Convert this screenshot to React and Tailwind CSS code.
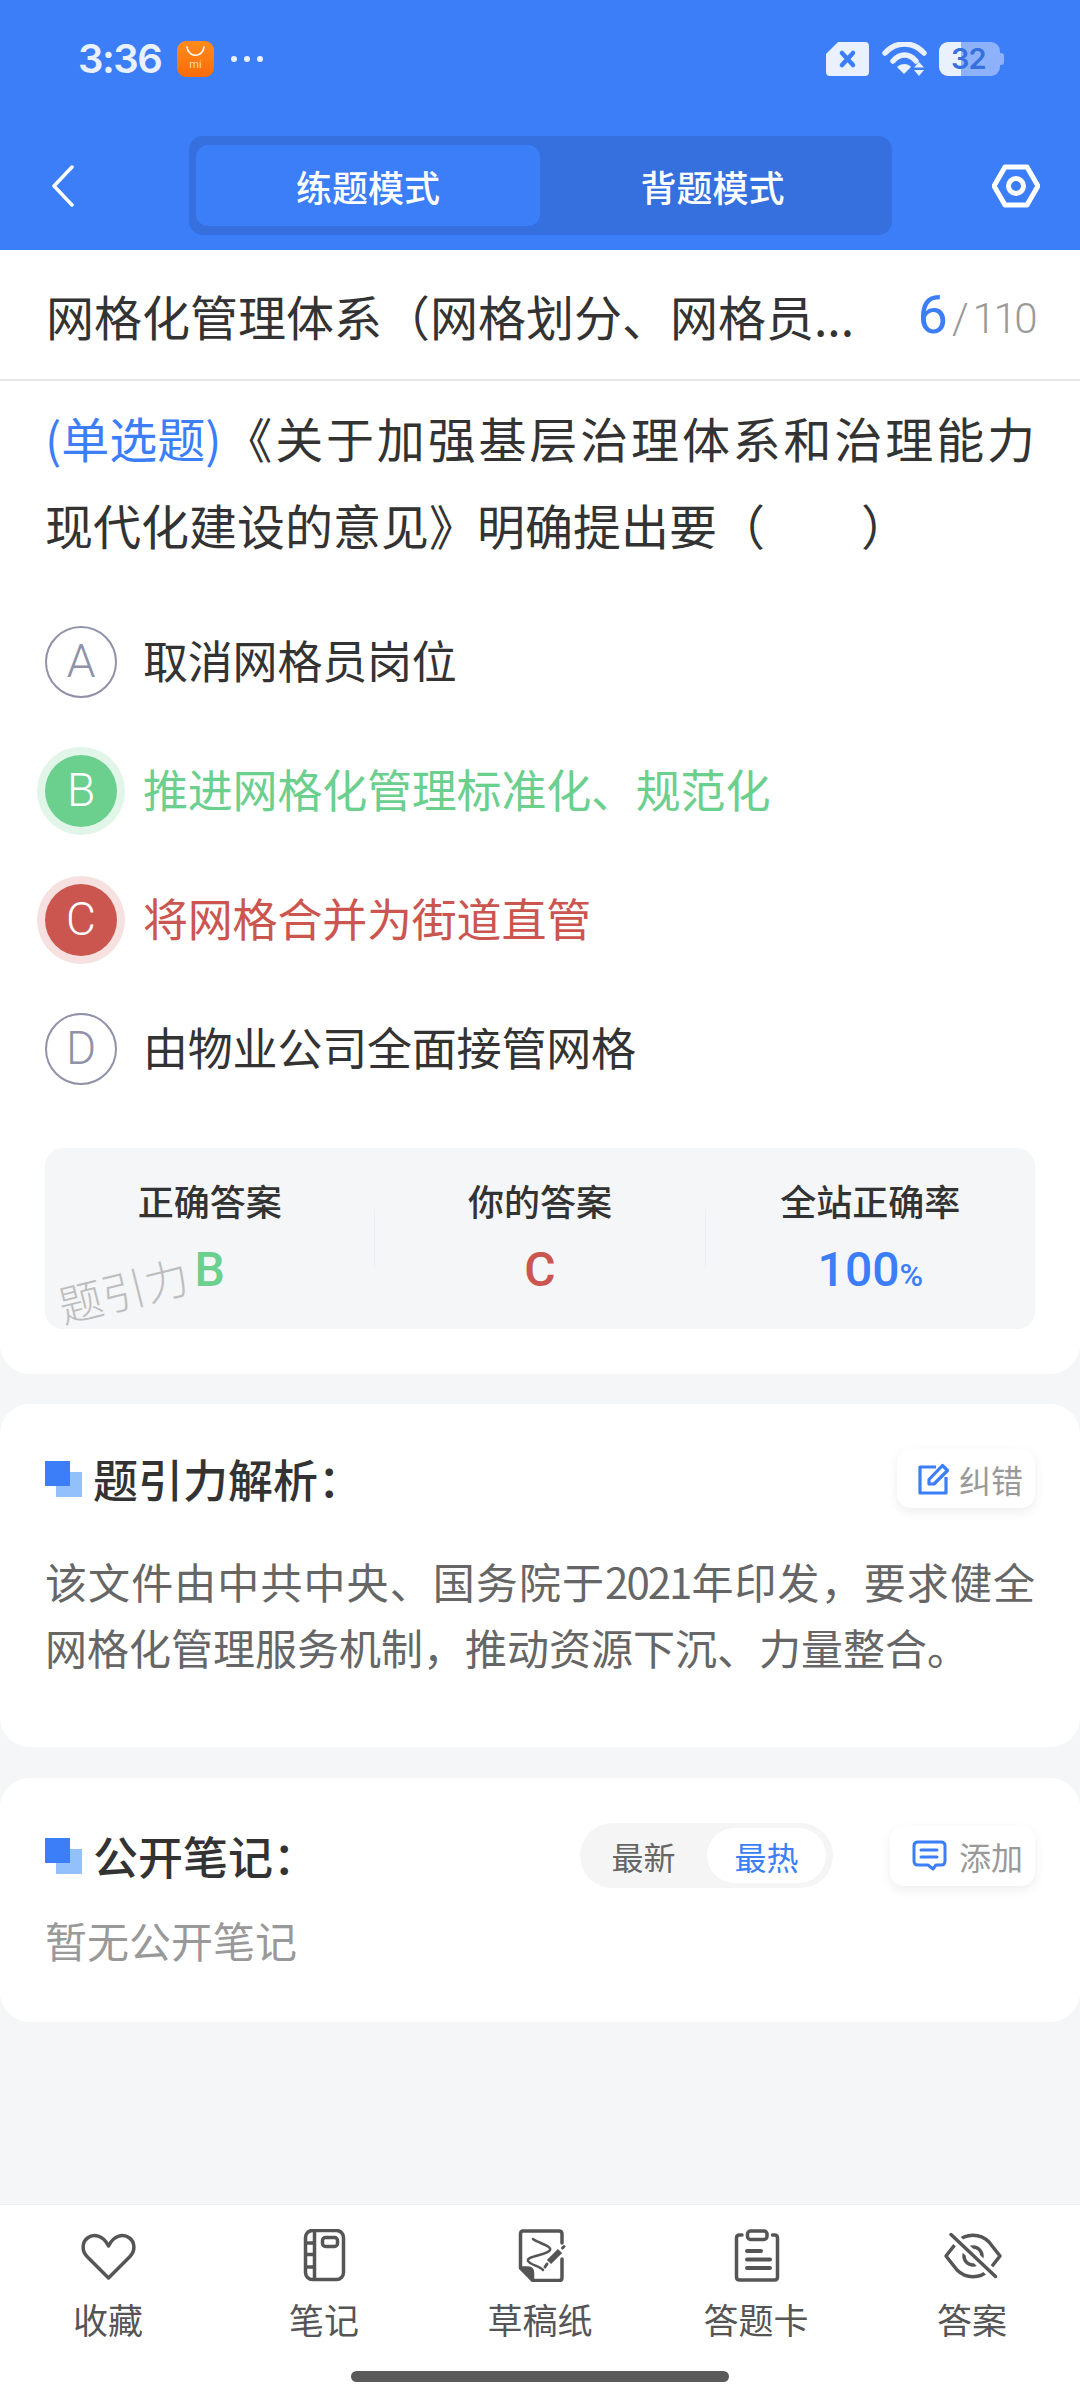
import React from "react";

const options = [
  { key: "A", text: "取消网格员岗位" },
  { key: "B", text: "推进网格化管理标准化、规范化", state: "right" },
  { key: "C", text: "将网格合并为街道直管", state: "wrong" },
  { key: "D", text: "由物业公司全面接管网格" },
];

function OptionRow({ letter, text, state }) {
  const badge =
    state === "right"
      ? "bg-[#6bcf8d] text-white shadow-[0_0_0_8px_#e1f5e9]"
      : state === "wrong"
        ? "bg-[#cb554f] text-white shadow-[0_0_0_8px_#f6e1e0]"
        : "border-2 border-[#8f92a8] text-[#8f92a8]";
  const label = state === "right" ? "text-[#6bcf8d]" : state === "wrong" ? "text-[#cb554f]" : "text-[#333333]";
  return (
    <div className="flex h-[129px] items-center">
      <div className={`flex h-[72px] w-[72px] shrink-0 items-center justify-center rounded-full font-['Roboto',sans-serif] text-[46px] font-light ${badge}`}>
        {letter}
      </div>
      <span className={`ml-[26px] pb-[4px] text-[45px] leading-[60px] tracking-[-0.2px] whitespace-nowrap ${label}`}>{text}</span>
    </div>
  );
}

function Stat({ label, children }) {
  return (
    <div className="flex flex-1 flex-col items-center pt-[27px]">
      <div className="text-[36px] leading-[50px] font-medium text-[#333333]">{label}</div>
      <div className="mt-[20px] font-['Roboto',sans-serif] text-[48px] leading-[50px] font-medium">{children}</div>
    </div>
  );
}

function Squares() {
  return (
    <div className="relative h-[36px] w-[37px] shrink-0">
      <div className="absolute right-0 bottom-0 h-[25px] w-[26px] bg-[#93bffb]" />
      <div className="absolute top-0 left-0 h-[25px] w-[25px] bg-[#3b7ef8]" />
    </div>
  );
}

function ChipButton({ icon, text, className }) {
  return (
    <div className={`flex items-center rounded-[14px] bg-white shadow-[0_4px_12px_rgba(0,0,0,0.07)] ${className}`}>
      {icon}
      <span className="text-[32px] leading-none text-[#999999]">{text}</span>
    </div>
  );
}

function NavIcon({ children }) {
  return (
    <svg viewBox="0 0 64 53" className="h-[53px] w-[64px]" fill="none" stroke="#555555" strokeWidth="3.5" strokeLinecap="round" strokeLinejoin="round">
      {children}
    </svg>
  );
}

const nav = [
  {
    label: "收藏",
    icon: <path d="M32.5 49 L11 27.5 C5.5 22 6 13 11.5 9 C17.5 4.5 27 6 32.5 17 C38 6 47.5 4.5 53.5 9 C59 13 59.5 22 54 27.5 Z" />,
  },
  {
    label: "笔记",
    icon: (
      <>
        <rect x="13.5" y="1.5" width="38" height="49" rx="7" />
        <path d="M22.5 2V50M14 14H22M14 25.5H22M14 38H22" />
        <rect x="30.5" y="8.5" width="15" height="9" rx="3" />
      </>
    ),
  },
  {
    label: "草稿纸",
    icon: (
      <>
        <path d="M54 14V5Q54 2 51 2H15Q12.5 2 12.5 5V39L25 51.5H51Q54 51.5 54 48.5V30" />
        <path d="M13 39H20Q24.5 39 24.5 44V51Z" fill="#555555" />
        <path d="M25 10C30 14 44 17 42 21C40 26 18 27 20 32C22 36 32 37 35 41" strokeWidth="2.5" />
        <path d="M52 22L41 33" strokeWidth="6" strokeLinecap="butt" />
        <path d="M39 35L37 38M54.5 19L56 17.5" strokeWidth="3" />
      </>
    ),
  },
  {
    label: "答题卡",
    icon: (
      <>
        <rect x="23.5" y="2" width="19.5" height="8.5" rx="3" />
        <path d="M18 6H15.5Q12.5 6 12.5 9V48Q12.5 51 15.5 51H50.5Q53.5 51 53.5 48V9Q53.5 6 50.5 6H48.5" />
        <path d="M23 22H37M23 30.5H46M23 39H46" strokeWidth="4" />
      </>
    ),
  },
  {
    label: "答案",
    icon: (
      <>
        <path d="M6 27L17 13C26 4 40 4 49 13L60 27L49 41C40 50 26 50 17 41Z" strokeWidth="3.5" />
        <circle cx="33" cy="27" r="9" strokeWidth="3.5" />
        <path d="M10 5L56 48" stroke="#ffffff" strokeWidth="10" strokeLinecap="butt" />
        <path d="M11 5.5L55.5 47.5" strokeWidth="3.5" />
      </>
    ),
  },
];

export default function App() {
  return (
    <div lang="zh-CN" className="flex h-[2400px] w-[1080px] flex-col overflow-hidden bg-[#f5f6f8] font-['Noto_Sans_CJK_SC','Noto_Sans',sans-serif]">
      <header className="h-[250px] shrink-0 bg-[#3b7ef8]">
        <div className="flex h-[118px] items-center justify-between pr-[76px] pl-[78px]">
          <div className="flex items-center">
            <span className="w-[82px] font-['Inter',sans-serif] text-[40px] leading-none font-semibold tracking-[-1.5px] whitespace-nowrap text-[#eaf1fe]">3:36</span>
            <div className="ml-[17px] flex h-[36px] w-[37px] flex-col items-center rounded-[9px] bg-gradient-to-b from-[#ff8c1a] to-[#fb6a0a]">
              <svg viewBox="0 0 37 36" className="absolute h-[36px] w-[37px]" fill="none" stroke="#fff" strokeWidth="1.6" strokeLinecap="round">
                <path d="M10 6C11 17 26 17 27 6" />
              </svg>
              <span className="mt-[17px] font-['Roboto',sans-serif] text-[11px] leading-[14px] text-[#ffd9b3]">mi</span>
            </div>
            <div className="ml-[17px] flex gap-[7px]">
              <span className="h-[6px] w-[6px] rounded-full bg-[#eaf1fe]" />
              <span className="h-[6px] w-[6px] rounded-full bg-[#eaf1fe]" />
              <span className="h-[6px] w-[6px] rounded-full bg-[#eaf1fe]" />
            </div>
          </div>
          <div className="flex items-center">
            <svg viewBox="0 0 43 34" className="h-[34px] w-[43px]">
              <path d="M12 0H39Q43 0 43 4V30Q43 34 39 34H4Q0 34 0 30V12Z" fill="#eaf1fe" />
              <path d="M16 11L27 23M27 11L16 23" stroke="#3b7ef8" strokeWidth="4.5" strokeLinecap="round" />
            </svg>
            <svg viewBox="0 0 46 34" className="ml-[13px] h-[34px] w-[46px]" fill="none">
              <path d="M3 11C14 -1 31 -1 42 11" stroke="#eaf1fe" strokeWidth="5.5" strokeLinecap="round" />
              <path d="M11 19C18 11 27 11 34 19" stroke="#eaf1fe" strokeWidth="5.5" strokeLinecap="round" />
              <path d="M15 25C19 21 26 21 29 25L22 32Z" fill="#eaf1fe" />
              <path d="M37 20L42 25.5H32ZM37 34L32 28H42Z" fill="#eaf1fe" />
            </svg>
            <div className="relative ml-[11px] flex h-[34px] w-[65px] items-center">
              <div className="h-[34px] w-[22px] rounded-l-[9px] bg-[#eaf1fe]" />
              <div className="h-[34px] w-[39px] rounded-r-[9px] bg-[#8db2fb]" />
              <div className="h-[12px] w-[4px] rounded-r-[3px] bg-[#8db2fb]" />
              <span className="absolute top-0 left-[12px] font-['Inter',sans-serif] text-[29px] leading-[34px] font-semibold tracking-[-1px] text-[#3570de]">32</span>
            </div>
          </div>
        </div>
        <div className="mt-[18px] flex h-[99px] items-center">
          <svg viewBox="0 0 24 42" className="ml-[51px] h-[42px] w-[24px]" fill="none" stroke="#fff" strokeWidth="3.5" strokeLinecap="round" strokeLinejoin="round">
            <path d="M21 2L3 21L21 40" />
          </svg>
          <div className="ml-[114px] flex h-[99px] w-[703px] items-center rounded-[14px] bg-[#3570de] px-[7px]">
            <div className="flex h-[81px] w-[344px] items-center justify-center rounded-[12px] bg-[#3b7ef8] text-[36px] font-medium text-white">练题模式</div>
            <div className="flex h-[81px] flex-1 items-center justify-center text-[36px] font-medium text-white">背题模式</div>
          </div>
          <svg viewBox="0 0 48 44" className="ml-[100px] h-[44px] w-[48px]" fill="none" stroke="#fff" strokeWidth="5" strokeLinejoin="round">
            <path d="M13 3H35L46 22L35 41H13L2 22Z" />
            <circle cx="24" cy="22" r="7.5" />
          </svg>
        </div>
      </header>

      <section className="shrink-0 rounded-b-[30px] bg-white pb-[45px]">
        <div className="flex h-[131px] items-center justify-between border-b-2 border-[#e6e6e6] pr-[45px] pl-[46px]">
          <span className="text-[48px] whitespace-nowrap text-[#333333]">网格化管理体系（网格划分、网格员...</span>
          <span className="font-['Roboto',sans-serif] whitespace-nowrap">
            <span className="text-[54px] text-[#3b7ef8]">6</span>
            <span className="ml-[4px] text-[42px] font-light text-[#999999]">/</span>
            <span className="ml-[4px] text-[42px] font-light tracking-[-2.5px] text-[#999999]">110</span>
          </span>
        </div>
        <div className="px-[45px] pt-[13px]">
          <p className="text-justify text-[48px] leading-[87px] text-[#333333]">
            <span className="inline-block text-[#3b7ef8]">(单选题)</span>《关于加强基层治理体系和治理能力现代化建设的意见》明确提出要（　　）
          </p>
          <div className="mt-[29px] flex flex-col">
            {options.map((o) => (
              <OptionRow key={o.key} letter={o.key} text={o.text} state={o.state} />
            ))}
          </div>
          <div className="relative mt-[35px] flex h-[181px] overflow-hidden rounded-[18px] bg-[#f5f6f8]">
            <Stat label="正确答案">
              <span className="text-[#6bcf8d]">B</span>
            </Stat>
            <div className="h-[59px] w-px self-center bg-[#eceef1]" />
            <Stat label="你的答案">
              <span className="text-[#cb554f]">C</span>
            </Stat>
            <div className="h-[59px] w-px self-center bg-[#eceef1]" />
            <Stat label="全站正确率">
              <span className="text-[#3b7ef8]">
                100<span className="text-[32px]">%</span>
              </span>
            </Stat>
            <span className="absolute top-[116px] left-[12px] -rotate-[14deg] text-[44px] leading-[50px] font-light text-[#bdbebf]">题引力</span>
          </div>
        </div>
      </section>

      <section className="mt-[30px] shrink-0 rounded-[30px] bg-white px-[45px] pt-[45px] pb-[67px]">
        <div className="flex h-[59px] items-center">
          <Squares />
          <span className="ml-[11px] text-[45px] leading-none font-medium text-[#333333]">题引力解析：</span>
          <ChipButton
            text="纠错"
            className="ml-auto h-[59px] w-[138px] pl-[21px]"
            icon={
              <svg viewBox="0 0 32 32" className="mr-[9px] h-[32px] w-[32px]" fill="none" stroke="#3b7ef8" strokeWidth="3.2" strokeLinejoin="round">
                <path d="M18 4H2V30H28V14" />
                <path d="M11 16.5L24.5 2.5L29.5 7.5L16 21H11Z" />
              </svg>
            }
          />
        </div>
        <p className="mt-[40px] text-justify text-[42px] leading-[66px] text-[#666666]">
          该文件由中共中央、国务院于<span className="tracking-[-2px]">2021</span>年印发，要求健全网格化管理服务机制，推动资源下沉、力量整合。
        </p>
      </section>

      <section className="mt-[31px] shrink-0 rounded-[30px] bg-white px-[45px] pt-[45px] pb-[52px]">
        <div className="flex h-[65px] items-center">
          <Squares />
          <span className="ml-[11px] text-[45px] leading-none font-medium text-[#333333]">公开笔记：</span>
          <div className="ml-auto flex h-[65px] w-[253px] items-center rounded-full bg-[#f5f5f5] pr-[7px]">
            <div className="flex-1 text-center text-[32px] text-[#666666]">最新</div>
            <div className="flex h-[55px] w-[119px] items-center justify-center rounded-full bg-white text-[32px] text-[#3b7ef8]">最热</div>
          </div>
          <ChipButton
            text="添加"
            className="ml-[57px] h-[60px] w-[145px] pl-[22px]"
            icon={
              <svg viewBox="0 0 35 31" className="mr-[12px] h-[31px] w-[35px]" fill="none" stroke="#3b7ef8" strokeWidth="3" strokeLinecap="round" strokeLinejoin="round">
                <path d="M6 2H29Q33 2 33 6V21Q33 25 29 25H24L21 29L16 25H6Q2 25 2 21V6Q2 2 6 2Z" />
                <path d="M9 10H25M9 17H25" />
              </svg>
            }
          />
        </div>
        <p className="mt-[22px] text-[42px] leading-[60px] text-[#999999]">暂无公开笔记</p>
      </section>

      <nav className="mt-auto h-[196px] shrink-0 border-t border-[#eff0f2] bg-white">
        <div className="grid grid-cols-5 pt-[24px]">
          {nav.map((item) => (
            <div key={item.label} className="flex flex-col items-center">
              <NavIcon>{item.icon}</NavIcon>
              <span className="mt-[15px] text-[35px] leading-[44px] text-[#555555]">{item.label}</span>
            </div>
          ))}
        </div>
        <div className="mx-auto mt-[30px] h-[11px] w-[378px] rounded-full bg-[#5a5a5a]" />
      </nav>
    </div>
  );
}
